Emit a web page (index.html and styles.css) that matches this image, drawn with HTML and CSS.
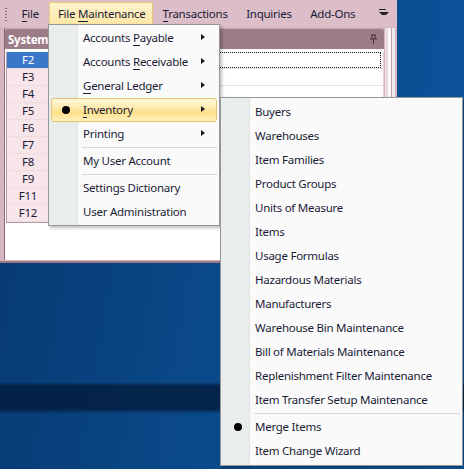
FILE: index.html
```html
<!DOCTYPE html>
<html lang="en">
<head>
    <meta charset="UTF-8">
    <title>File Maintenance</title>
    <link rel="stylesheet" href="styles.css">
</head>
<body>
    <div class="desktop">
        <div class="window">
            <div class="menubar">
                <span class="grip"></span>
                <span class="menu-item"><u>F</u>ile</span>
                <span class="menu-item active">File <u>M</u>aintenance</span>
                <span class="menu-item"><u>T</u>ransactions</span>
                <span class="menu-item">Inquiries</span>
                <span class="menu-item">Add-Ons</span>
                <span class="overflow"></span>
            </div>
            <div class="frame">
                <div class="pane">
                    <div class="pane-head">
                        <span>System</span>
                        <svg class="pin" width="9" height="10" viewBox="0 0 9 10">
                            <path d="M2 1h5M3 1v4M6 1v4M1 5h7M4.5 5v5" stroke="#4a2f38" stroke-width="1" fill="none"/>
                        </svg>
                    </div>
                    <div class="pane-body">
                        <div class="keys">
                            <div class="row selected"><span class="key">F2</span><span class="val focus"></span></div>
                            <div class="row"><span class="key">F3</span><span class="val"></span></div>
                            <div class="row"><span class="key">F4</span><span class="val"></span></div>
                            <div class="row"><span class="key">F5</span><span class="val"></span></div>
                            <div class="row"><span class="key">F6</span><span class="val"></span></div>
                            <div class="row"><span class="key">F7</span><span class="val"></span></div>
                            <div class="row"><span class="key">F8</span><span class="val"></span></div>
                            <div class="row"><span class="key">F9</span><span class="val"></span></div>
                            <div class="row"><span class="key">F11</span><span class="val"></span></div>
                            <div class="row"><span class="key">F12</span><span class="val"></span></div>
                        </div>
                    </div>
                </div>
                <div class="splitter"></div>
            </div>
        </div>

        <div class="popup dropdown">
            <div class="item sub">Accounts <u>P</u>ayable</div>
            <div class="item sub">Accounts <u>R</u>eceivable</div>
            <div class="item sub"><u>G</u>eneral Ledger</div>
            <div class="item sub checked hot"><u>I</u>nventory</div>
            <div class="item sub">Printing</div>
            <div class="sep"></div>
            <div class="item">My User Account</div>
            <div class="sep"></div>
            <div class="item">Settings Dictionary</div>
            <div class="item">User Administration</div>
        </div>

        <div class="popup submenu">
            <div class="item">Buyers</div>
            <div class="item">Warehouses</div>
            <div class="item">Item Families</div>
            <div class="item">Product Groups</div>
            <div class="item">Units of Measure</div>
            <div class="item">Items</div>
            <div class="item">Usage Formulas</div>
            <div class="item">Hazardous Materials</div>
            <div class="item">Manufacturers</div>
            <div class="item">Warehouse Bin Maintenance</div>
            <div class="item">Bill of Materials Maintenance</div>
            <div class="item">Replenishment Filter Maintenance</div>
            <div class="item">Item Transfer Setup Maintenance</div>
            <div class="sep"></div>
            <div class="item checked">Merge Items</div>
            <div class="item">Item Change Wizard</div>
        </div>
    </div>
</body>
</html>
```

FILE: styles.css
```css
body {
    margin: 0;
    font-family: "Noto Sans", "Open Sans", sans-serif;
    font-size: 11.5px;
    letter-spacing: -0.25px;
    color: #1b1b36;
}
.desktop {
    position: relative;
    width: 464px;
    height: 469px;
    overflow: hidden;
    background:
        linear-gradient(to bottom, transparent 0, transparent 382px, rgba(3, 24, 56, 0.75) 386px, rgba(3, 24, 56, 0.75) 409px, transparent 414px),
        linear-gradient(100deg, #06386f 0%, #0a4887 45%, #0c559e 100%);
}
u {
    text-decoration: none;
    border-bottom: 1px solid currentColor;
    line-height: 1;
}

/* application window */
.window {
    width: 397px;
    height: 263px;
    background: #c8a8b2;
    display: flex;
    flex-direction: column;
}
.menubar {
    height: 27px;
    background: #dcbec8;
    display: flex;
    align-items: center;
    padding-left: 5px;
    box-sizing: border-box;
    white-space: nowrap;
}
.grip {
    width: 2px;
    height: 14px;
    margin-right: 6px;
    background: radial-gradient(circle, #8f6d78 0.8px, transparent 1px) 0 0 / 2px 3px;
}
.menu-item {
    padding: 3px 7.5px 4px;
    margin-right: 1.5px;
    border: 1px solid transparent;
    line-height: 15px;
}
.menu-item.active {
    background: linear-gradient(#fff3cd, #fde6a4);
    border-color: #e8c97a;
    border-bottom-color: #fde6a4;
    padding: 3px 6px 5px 8px;
    margin-top: 2px;
}
.overflow {
    margin-left: auto;
    margin-right: 8px;
    border-left: 3px solid transparent;
    border-right: 3px solid transparent;
    border-top: 3px solid #222;
}
.overflow::before {
    content: "";
    display: block;
    width: 7px;
    height: 1px;
    background: #222;
    margin: -6px 0 0 -3px;
}
.frame {
    flex: 1;
    display: flex;
    padding: 1px 1px 1px 4px;
    border-bottom: 2px solid #9c7a85;
    background: #d6b6c0;
}
.pane {
    flex: 1;
    display: flex;
    flex-direction: column;
    border-left: 1px solid #8d6b76;
}
.pane-head {
    height: 20px;
    background: #9c7c87;
    border-top: 1px solid #c7aab3;
    border-radius: 3px 3px 0 0;
    display: flex;
    align-items: center;
    justify-content: space-between;
    padding: 0 6px 0 3px;
    color: #fff;
    font-weight: bold;
}
.pin {
    display: block;
}
.pane-body {
    flex: 1;
    background: #fff;
    padding: 3px 0 0 1px;
}
.keys {
    border-left: 1px solid #b89aa4;
    border-bottom: 1px solid #b89aa4;
    border-right: 1px solid #e6cfd6;
}
.row {
    display: flex;
    height: 17px;
    border-bottom: 1px solid #ecdce1;
    box-sizing: border-box;
}
.key {
    width: 42px;
    background: #f7e5ea;
    border-right: 1px solid #e3ccd3;
    text-align: center;
    line-height: 16px;
}
.row.selected .key {
    background: #3a77c9;
    color: #fff;
}
.val {
    flex: 1;
}
.val.focus {
    border: 1px dotted #111;
    margin-right: 2px;
}
.splitter {
    width: 11px;
    margin-left: 1px;
    background: linear-gradient(to right, #ead9de 0 3px, #fbf7f8 3px 6px, #bfa0aa 6px 7px, #f3e8eb 7px 10px, #d6b6c0 10px);
}

/* popup menus */
.popup {
    position: absolute;
    background: linear-gradient(to right, #e9eded 0, #e9eded 28px, #e2e3e3 28px, #e2e3e3 29px, #fafafa 29px);
    border: 1px solid #979797;
    padding: 2px;
    box-sizing: border-box;
    box-shadow: 2px 2px 3px rgba(0, 0, 0, 0.25);
}
.dropdown {
    left: 48px;
    top: 24px;
    width: 172px;
    height: 202px;
    padding-top: 1px;
}
.submenu {
    left: 220px;
    top: 97px;
    width: 243px;
    height: 369px;
}
.item {
    position: relative;
    height: 24px;
    line-height: 22px;
    padding-left: 31px;
    border: 1px solid transparent;
    border-radius: 3px;
    box-sizing: border-box;
    white-space: nowrap;
}
.item.hot {
    background: linear-gradient(#fff8dc 0%, #fde9a6 45%, #fddf86 60%, #fff0be 100%);
    border-color: #e4c36e;
}
.item.sub::after {
    content: "";
    position: absolute;
    right: 11px;
    top: 7px;
    border-top: 3.5px solid transparent;
    border-bottom: 3.5px solid transparent;
    border-left: 4px solid #1a1a1a;
}
.item.checked::before {
    content: "";
    position: absolute;
    left: 10px;
    top: 7px;
    width: 8px;
    height: 8px;
    border-radius: 50%;
    background: #000;
}
.sep {
    margin-left: 31px;
    border-top: 1px solid #d7d7d7;
    box-sizing: border-box;
    margin-top: 1px;
    height: 2px;
}
```
